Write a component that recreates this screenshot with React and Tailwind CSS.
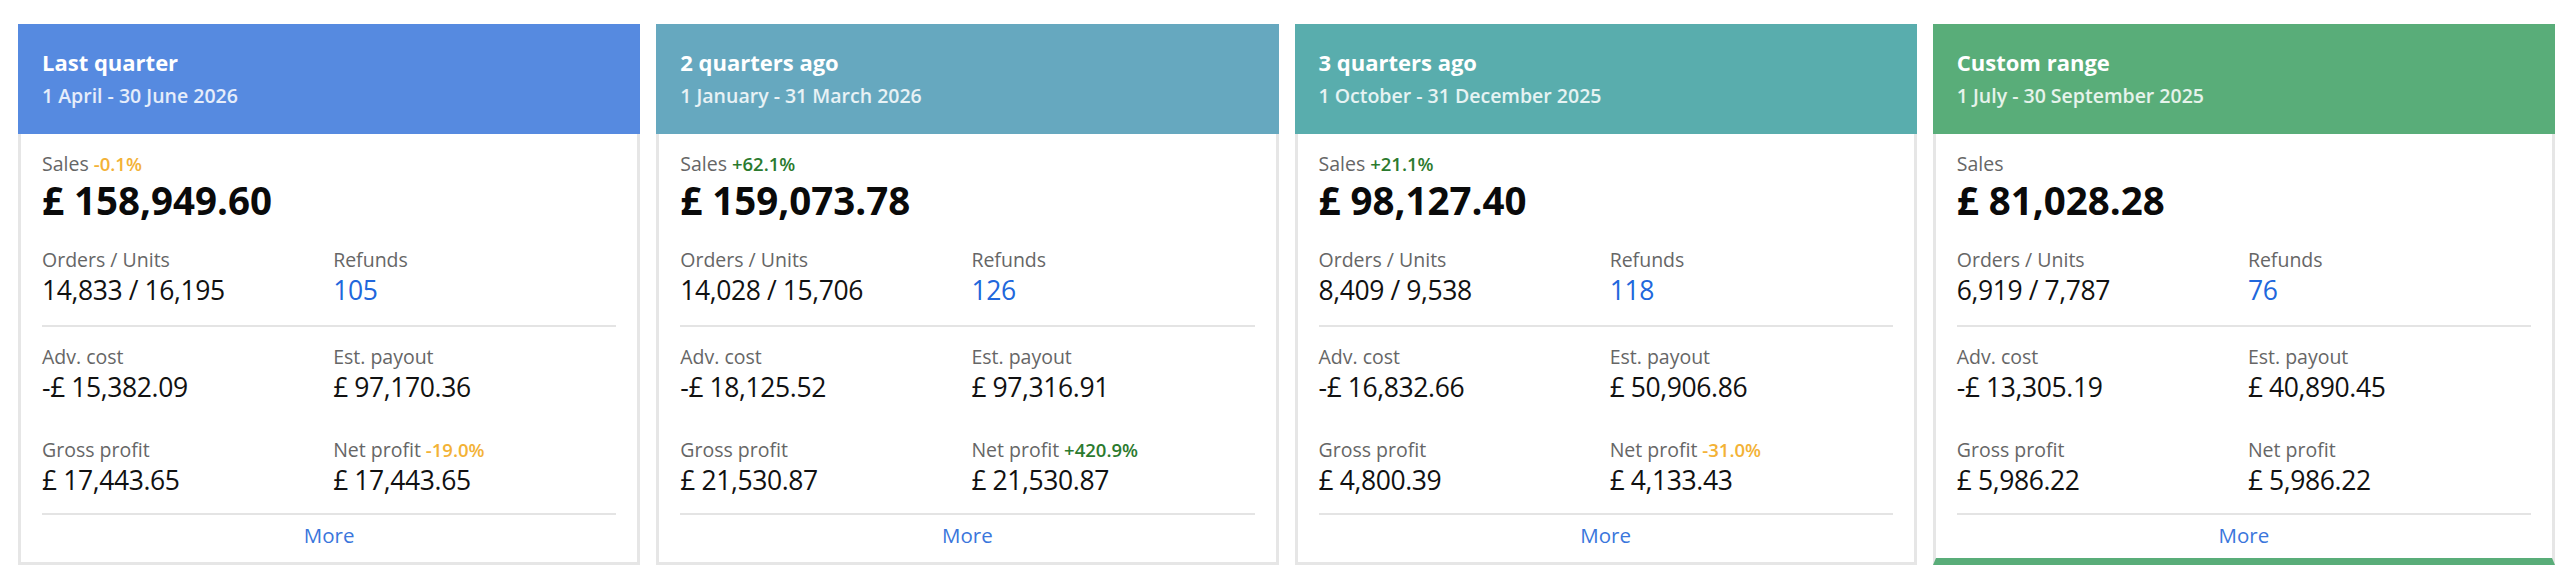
const cards = [
  {
    title: "Last quarter",
    range: "1 April - 30 June 2026",
    head: "bg-[#568ae0]",
    salesPct: { text: "-0.1%", up: false },
    sales: "£ 158,949.60",
    orders: "14,833 / 16,195",
    refunds: "105",
    adv: "-£ 15,382.09",
    payout: "£ 97,170.36",
    gross: "£ 17,443.65",
    netPct: { text: "-19.0%", up: false },
    net: "£ 17,443.65",
  },
  {
    title: "2 quarters ago",
    range: "1 January - 31 March 2026",
    head: "bg-[#66a8bf]",
    salesPct: { text: "+62.1%", up: true },
    sales: "£ 159,073.78",
    orders: "14,028 / 15,706",
    refunds: "126",
    adv: "-£ 18,125.52",
    payout: "£ 97,316.91",
    gross: "£ 21,530.87",
    netPct: { text: "+420.9%", up: true },
    net: "£ 21,530.87",
  },
  {
    title: "3 quarters ago",
    range: "1 October - 31 December 2025",
    head: "bg-[#59adad]",
    salesPct: { text: "+21.1%", up: true },
    sales: "£ 98,127.40",
    orders: "8,409 / 9,538",
    refunds: "118",
    adv: "-£ 16,832.66",
    payout: "£ 50,906.86",
    gross: "£ 4,800.39",
    netPct: { text: "-31.0%", up: false },
    net: "£ 4,133.43",
  },
  {
    title: "Custom range",
    range: "1 July - 30 September 2025",
    head: "bg-[#59ad79]",
    salesPct: null,
    sales: "£ 81,028.28",
    orders: "6,919 / 7,787",
    refunds: "76",
    adv: "-£ 13,305.19",
    payout: "£ 40,890.45",
    gross: "£ 5,986.22",
    netPct: null,
    net: "£ 5,986.22",
    selected: true,
  },
];

function Pct({ p }) {
  if (!p) return null;
  return (
    <span
      className={
        p.up
          ? "ml-[5px] text-[18.5px] font-semibold leading-none text-[#2b7a2e]"
          : "ml-[5px] text-[18.5px] font-semibold leading-none text-[#f3b236]"
      }
    >
      {p.text}
    </span>
  );
}

function Label({ children, pct }) {
  return (
    <div className="h-[24px] text-[19.5px] leading-[24px] text-[#666666]">
      {children}
      <Pct p={pct} />
    </div>
  );
}

function Value({ children, blue }) {
  return (
    <div
      className={
        blue
          ? "h-[36px] text-[26.5px] leading-[36px] tracking-[-0.4px] text-[#2167dc]"
          : "h-[36px] text-[26.5px] leading-[36px] tracking-[-0.4px] text-[#111111]"
      }
    >
      {children}
    </div>
  );
}

function Card({ c }) {
  return (
    <div className="flex flex-col">
      <div className={`${c.head} h-[110px] px-[24px] pt-[20px] text-white`}>
        <div className="text-[22px] font-bold leading-[36px]">{c.title}</div>
        <div className="mt-[3px] text-[19.5px] font-semibold leading-[26px] text-white/85">
          {c.range}
        </div>
      </div>
      <div
        className={
          c.selected
            ? "border-x-[3px] border-b-[7px] border-x-[#e6e6e6] border-b-[#59ad79] px-[21px]"
            : "border-x-[3px] border-b-[3px] border-[#e6e6e6] px-[21px]"
        }
      >
        <div className="pt-[18px] pb-[17px]">
          <Label pct={c.salesPct}>Sales</Label>
          <div className="mt-px h-[46px] text-[38.5px] font-bold leading-[46px] text-[#0a0a0a]">
            {c.sales}
          </div>
          <div className="mt-[25px] grid grid-cols-2 gap-x-2">
            <div>
              <Label>Orders / Units</Label>
              <Value>{c.orders}</Value>
            </div>
            <div>
              <Label>Refunds</Label>
              <Value blue>{c.refunds}</Value>
            </div>
          </div>
        </div>
        <div className="h-[2px] bg-[#e4e4e4]" />
        <div className="grid grid-cols-2 gap-x-2 gap-y-[33px] pt-[18px] pb-[15px]">
          <div>
            <Label>Adv. cost</Label>
            <Value>{c.adv}</Value>
          </div>
          <div>
            <Label>Est. payout</Label>
            <Value>{c.payout}</Value>
          </div>
          <div>
            <Label>Gross profit</Label>
            <Value>{c.gross}</Value>
          </div>
          <div>
            <Label pct={c.netPct}>Net profit</Label>
            <Value>{c.net}</Value>
          </div>
        </div>
        <div className="h-[2px] bg-[#e4e4e4]" />
        <div
          className={
            c.selected
              ? "h-[43px] pt-[7px] text-center text-[20.5px] leading-[26px] text-[#3a76dc]"
              : "h-[47px] pt-[7px] text-center text-[20.5px] leading-[26px] text-[#3a76dc]"
          }
        >
          More
        </div>
      </div>
    </div>
  );
}

export default function App() {
  return (
    <div className="min-h-[582px] w-[2568px] bg-white pl-[18px] pr-[13px] pt-[24px] font-['Open_Sans',sans-serif]">
      <div className="grid grid-cols-4 gap-x-[16px]">
        {cards.map((c) => (
          <Card key={c.title} c={c} />
        ))}
      </div>
    </div>
  );
}
